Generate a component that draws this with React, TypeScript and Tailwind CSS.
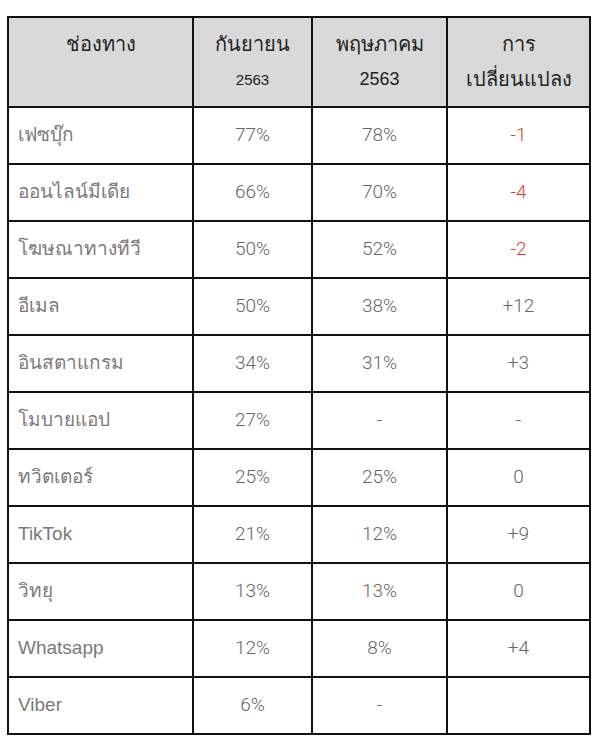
const rows: [string, string, string, string, boolean][] = [
  ["เฟซบุ๊ก", "77%", "78%", "-1", true],
  ["ออนไลน์มีเดีย", "66%", "70%", "-4", true],
  ["โฆษณาทางทีวี", "50%", "52%", "-2", true],
  ["อีเมล", "50%", "38%", "+12", false],
  ["อินสตาแกรม", "34%", "31%", "+3", false],
  ["โมบายแอป", "27%", "-", "-", false],
  ["ทวิตเตอร์", "25%", "25%", "0", false],
  ["TikTok", "21%", "12%", "+9", false],
  ["วิทยุ", "13%", "13%", "0", false],
  ["Whatsapp", "12%", "8%", "+4", false],
  ["Viber", "6%", "-", "", false],
]

export default function App() {
  return (
    <div className="w-[603px] h-[744px] bg-white pt-[16px] pl-[7px] font-['Liberation_Sans',_sans-serif]">
      <table className="border-collapse table-fixed w-[582px]">
        <colgroup>
          <col className="w-[185px]" />
          <col className="w-[119px]" />
          <col className="w-[135px]" />
          <col className="w-[143px]" />
        </colgroup>
        <thead>
          <tr className="bg-[#d9d9d9] h-[90px] text-[#222] text-[20px]">
            <th className="border-2 border-[#111] align-top font-normal pt-[9px] leading-[35px]">ช่องทาง</th>
            <th className="border-2 border-[#111] align-top font-normal pt-[9px] leading-[35px]">
              กันยายน
              <div className="text-[15px]">2563</div>
            </th>
            <th className="border-2 border-[#111] align-top font-normal pt-[9px] leading-[35px]">
              พฤษภาคม
              <div className="text-[18px]">2563</div>
            </th>
            <th className="border-2 border-[#111] align-top font-normal pt-[9px] leading-[35px]">
              การ
              <div>เปลี่ยนแปลง</div>
            </th>
          </tr>
        </thead>
        <tbody className="text-[19px] text-[#666]">
          {rows.map(([name, sep, may, diff, neg]) => (
            <tr key={name} className="h-[57px]">
              <td className="border-2 border-[#111] pl-[9px] font-normal text-[#7a7a7a]">{name}</td>
              <td className="border-2 border-[#111] text-center font-['Roboto',_sans-serif] font-light">{sep}</td>
              <td className="border-2 border-[#111] text-center font-['Roboto',_sans-serif] font-light">{may}</td>
              <td className={`border-2 border-[#111] text-center font-['Roboto',_sans-serif] font-light ${neg ? "text-[#e53935]" : ""}`}>{diff}</td>
            </tr>
          ))}
        </tbody>
      </table>
    </div>
  )
}
